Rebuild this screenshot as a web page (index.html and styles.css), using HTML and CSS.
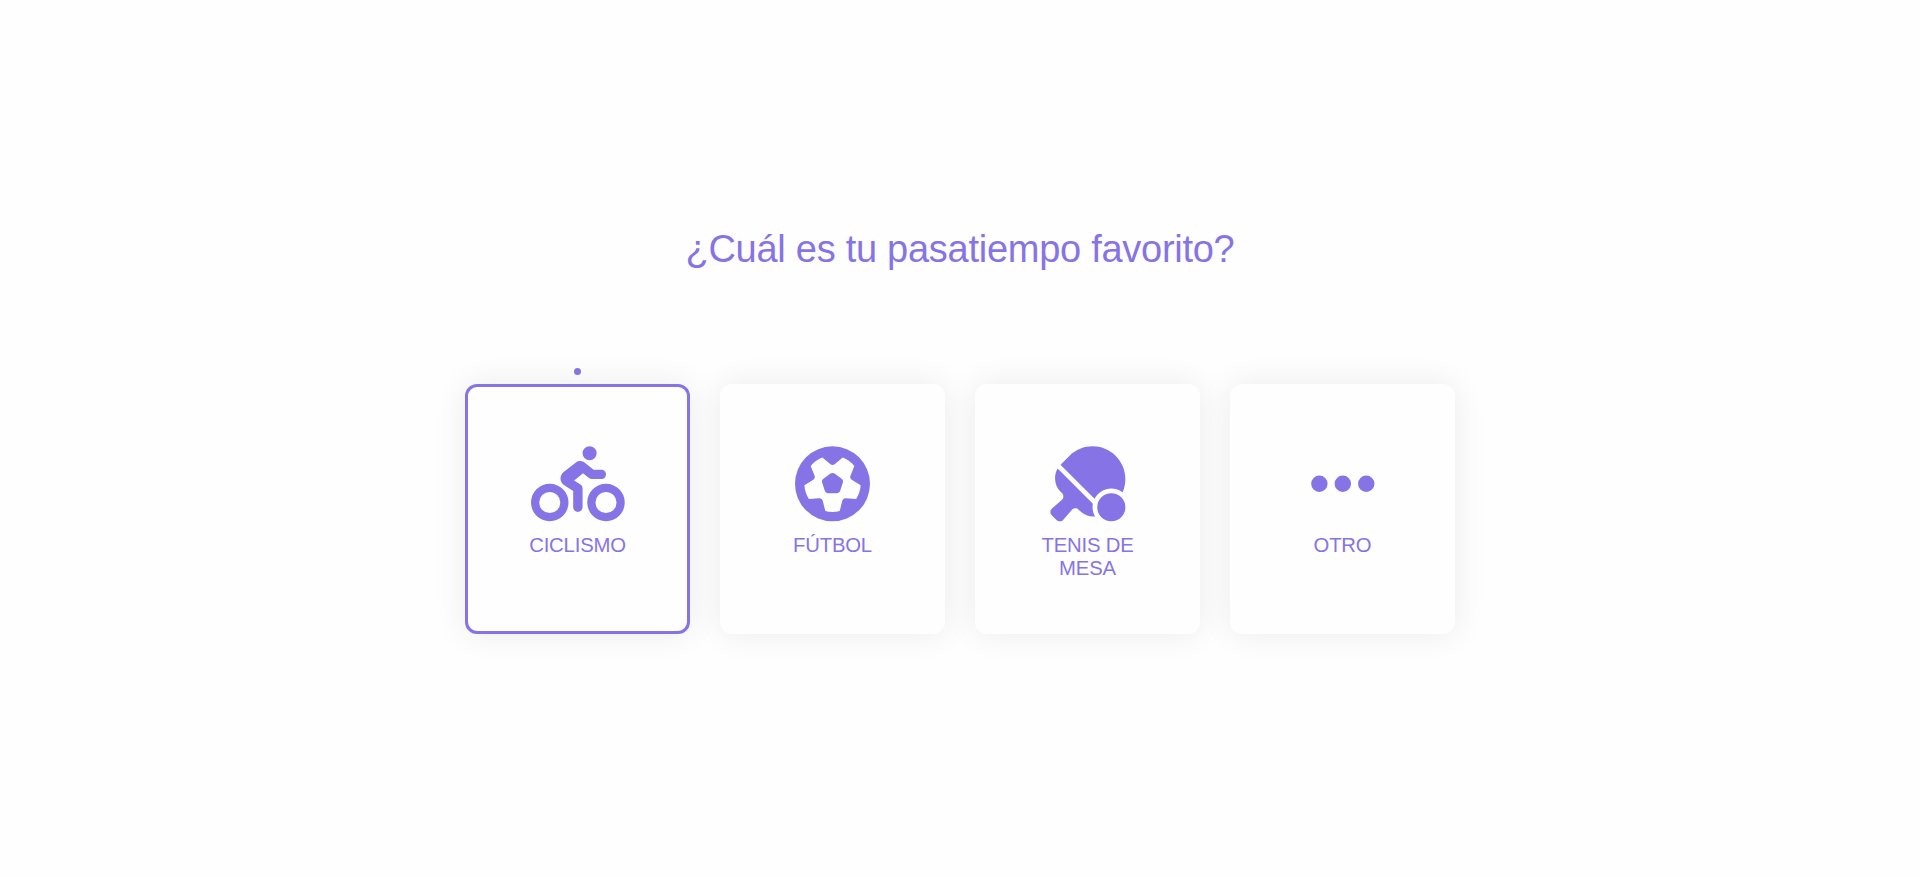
FILE: index.html
```html
<!DOCTYPE html>
<html lang="es">
<head>
<meta charset="utf-8">
<title>Pasatiempo favorito</title>
<link rel="stylesheet" href="styles.css">
</head>
<body>
<main class="survey">
  <h1 class="title">¿Cuál es tu pasatiempo favorito?</h1>
  <div class="options">
    <div class="card selected">
      <svg class="icon" viewBox="0 0 640 512"><path d="M400 96a48 48 0 1 0 0-96 48 48 0 1 0 0 96zm27.2 64l-61.8-48.8c-17.3-13.6-41.7-13.8-59.1-.3l-83.1 64.2c-30.7 23.8-28.5 70.8 4.3 91.6L288 305.1V416c0 17.7 14.3 32 32 32s32-14.3 32-32V288c0-10.7-5.3-20.7-14.2-26.6L295 232.9l60.3-48.5L396 217c5.7 4.5 12.7 7 20 7h64c17.7 0 32-14.3 32-32s-14.3-32-32-32H427.2zM56 384a72 72 0 1 1 144 0A72 72 0 1 1 56 384zm200 0A128 128 0 1 0 0 384a128 128 0 1 0 256 0zm184 0a72 72 0 1 1 144 0 72 72 0 1 1 -144 0zm200 0a128 128 0 1 0 -256 0 128 128 0 1 0 256 0z"/></svg>
      <span class="label">CICLISMO</span>
    </div>
    <div class="card">
      <svg class="icon" viewBox="0 0 512 512"><path fill-rule="evenodd" d="M417.3 360.1l-71.6-4.8c-5.2-.3-10.3 1.1-14.5 4.2s-7.2 7.4-8.4 12.5l-17.6 69.6C289.5 445.8 273 448 256 448s-33.5-2.2-49.2-6.4L189.2 372c-1.3-5-4.3-9.4-8.4-12.5s-9.3-4.5-14.5-4.2l-71.6 4.8c-17.6-27.2-28.5-59.2-30.4-93.6L125 228.3c4.4-2.8 7.6-7 9.2-11.9s1.4-10.2-.5-15l-26.7-66.6C128 109.2 155.3 89 186.9 76.9l55.2 46c4 3.3 9 5.1 14.1 5.1s10.2-1.8 14.1-5.1l55.2-46c31.6 12.1 58.9 32.3 79.9 57.9l-26.7 66.6c-1.9 4.8-2.1 10.1-.5 15s4.9 9.1 9.2 11.9l60.7 38.2c-1.9 34.4-12.8 66.4-30.4 93.6zM256 512A256 256 0 1 0 256 0a256 256 0 1 0 0 512zm14.1-325.7c-8.4-6.1-19.8-6.1-28.2 0L194 221c-8.4 6.1-11.9 16.9-8.7 26.8l18.3 56.3c3.2 9.9 12.4 16.6 22.8 16.6h59.2c10.4 0 19.6-6.7 22.8-16.6l18.3-56.3c3.2-9.9-.3-20.7-8.7-26.8l-47.9-34.8z"/></svg>
      <span class="label">FÚTBOL</span>
    </div>
    <div class="card">
      <svg class="icon" viewBox="0 0 640 512"><path d="M480 288c-50.1 0-93.6 28.8-114.6 70.8L132.9 126.3l.6-.6 60.1-60.1c87.5-87.5 229.3-87.5 316.8 0c67.1 67.1 82.7 166.3 46.8 248.3C535.8 297.6 509 288 480 288zM113.3 151.9L354.1 392.7c-1.4 7.5-2.1 15.3-2.1 23.3c0 23.2 6.2 44.9 16.9 63.7c-3 .2-6.1 .3-9.2 .3H357c-33.9 0-66.5-13.5-90.5-37.5l-9.8-9.8c-13.1-13.1-34.6-12.4-46.8 1.7L152.2 501c-5.8 6.7-14.2 10.7-23 11s-17.5-3.1-23.8-9.4l-32-32c-6.3-6.3-9.7-14.9-9.4-23.8s4.3-17.2 11-23l66.6-57.7c14-12.2 14.8-33.7 1.7-46.8l-9.8-9.8c-24-24-37.5-56.6-37.5-90.5v-2.7c0-22.8 6.1-44.9 17.3-64.3zM480 320a96 96 0 1 1 0 192 96 96 0 1 1 0-192z"/></svg>
      <span class="label">TENIS DE MESA</span>
    </div>
    <div class="card">
      <svg class="icon" viewBox="0 0 448 512"><path d="M8 256a56 56 0 1 1 112 0A56 56 0 1 1 8 256zm160 0a56 56 0 1 1 112 0 56 56 0 1 1 -112 0zm216-56a56 56 0 1 1 0 112 56 56 0 1 1 0-112z"/></svg>
      <span class="label">OTRO</span>
    </div>
  </div>
</main>
</body>
</html>
```
FILE: styles.css
```css
* {
  box-sizing: border-box;
}

body {
  margin: 0;
  background: #fefefe;
  color: #8674e6;
  font-family: "Liberation Sans", Arial, sans-serif;
}

.survey {
  height: 878px;
  padding-top: 227px;
  display: flex;
  flex-direction: column;
  align-items: center;
}

.title {
  margin: 0;
  height: 157px;
  font-size: 38px;
  font-weight: 400;
  line-height: 45px;
  letter-spacing: -0.27px;
}

.options {
  display: flex;
  gap: 30px;
}

.card {
  position: relative;
  width: 225px;
  height: 250px;
  padding: 62px 50px 0;
  display: flex;
  flex-direction: column;
  align-items: center;
  border-radius: 12px;
  background: #fefefe;
  box-shadow: 0 0 32px rgba(0, 0, 0, 0.08);
}

.selected {
  padding: 59px 45px 0;
  border: 3px solid #8674e6;
}

.selected::before {
  content: "";
  position: absolute;
  top: -19px;
  left: 50%;
  width: 7px;
  height: 7px;
  margin-left: -3.5px;
  border-radius: 50%;
  background: #8674e6;
}

.icon {
  height: 75px;
  flex: none;
  fill: currentColor;
  overflow: visible;
  transform: translateY(0.3px);
}

.label {
  margin-top: 13px;
  font-size: 20.3px;
  line-height: 23px;
  letter-spacing: -0.18px;
  text-align: center;
}
```
